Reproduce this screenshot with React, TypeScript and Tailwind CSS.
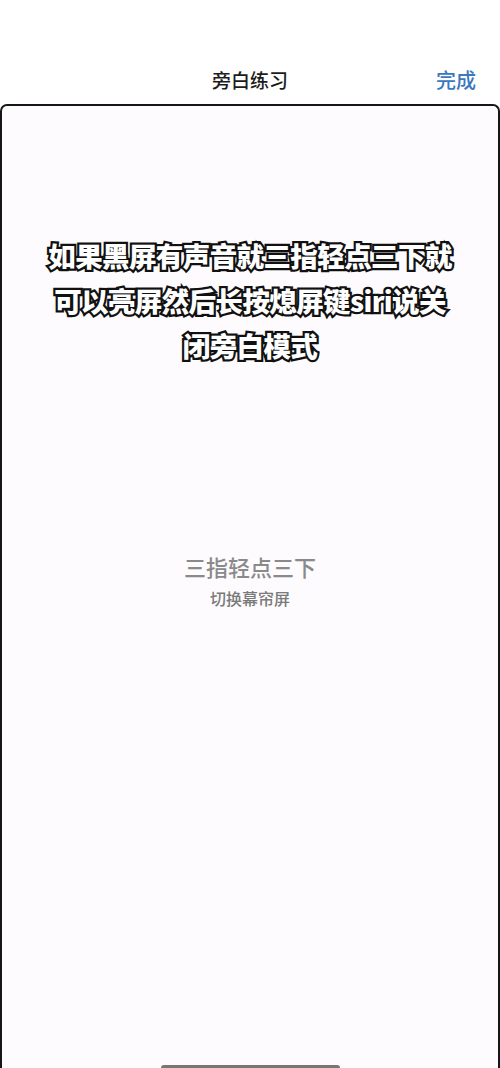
import React from 'react'

const font = "font-['Noto_Sans_CJK_SC','Noto_Sans',sans-serif]"

export default function App() {
  return (
    <div className={`flex h-[1068px] w-full flex-col overflow-hidden bg-white ${font}`}>
      {/* header */}
      <div className="grid h-[104px] grid-cols-[1fr_auto_1fr] items-end pb-[10px]">
        <div />
        <div className="text-[19px] leading-[28px] font-medium text-[#1c1c1c]">旁白练习</div>
        <div className="flex justify-end pr-[24px]">
          <span className="text-[20px] leading-[28px] font-medium text-[#3b78c0]">完成</span>
        </div>
      </div>

      {/* practice card */}
      <div className="flex flex-1 flex-col rounded-t-[7px] border-2 border-b-0 border-[#161616] bg-[#fdfbfd]">
        <div className="pt-[127px] text-center text-[27.5px] leading-[45px] font-black tracking-[-0.6px] text-white [-webkit-text-stroke:4.5px_#111] [paint-order:stroke_fill]">
          如果黑屏有声音就三指轻点三下就
          <br />
          可以亮屏然后长按熄屏键siri说关
          <br />
          闭旁白模式
        </div>

        <div className="mt-[183px] flex flex-col items-center">
          <div className="text-[22px] leading-[30px] font-medium text-[#8a8a8a]">三指轻点三下</div>
          <div className="mt-[6px] text-[16px] leading-[22px] font-medium text-[#7a7a7a]">切换幕帘屏</div>
        </div>

        <div className="mx-auto mt-auto h-[3px] w-[179px] rounded-t-full bg-[#77776f]" />
      </div>
    </div>
  )
}
